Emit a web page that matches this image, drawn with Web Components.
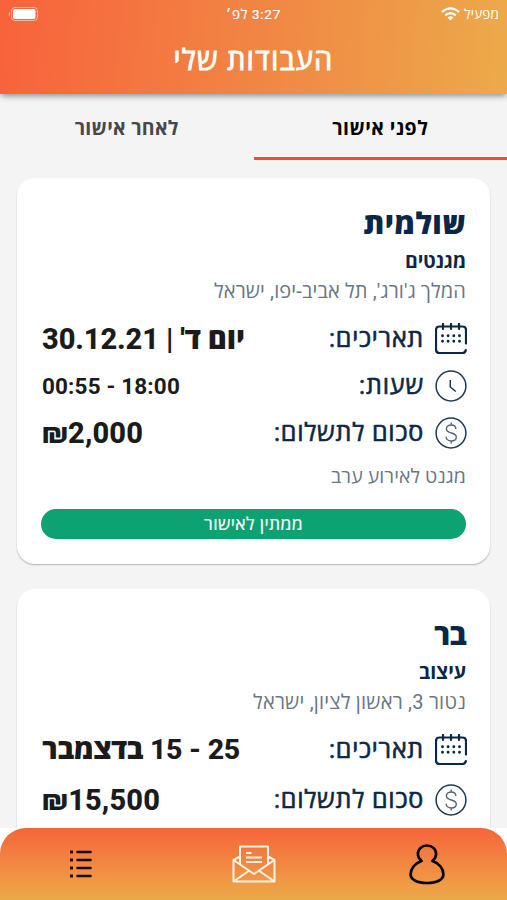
<!DOCTYPE html>
<html lang="he" dir="rtl">
<head>
<meta charset="utf-8">
<title>העבודות שלי</title>
<style>
html,body{margin:0;height:100%}
body{background:#f4f4f4;font-family:Roboto,"Open Sans","Liberation Sans",sans-serif;overflow:hidden}
</style>
</head>
<body>
<script>
const define=(name,html,setup)=>customElements.define(name,class extends HTMLElement{
  connectedCallback(){
    if(this.shadowRoot)return;
    this.attachShadow({mode:'open'}).innerHTML=html;
    if(setup)setup(this,this.shadowRoot);
  }
});

// One line of text, tracked so that its run is `w` pixels wide.
define('fit-text',`<style>:host{display:block;flex:none;white-space:nowrap}span{display:inline-block}</style><span><slot></slot></span>`,(el,root)=>{
  const s=root.querySelector('span'),w=+el.getAttribute('w');
  const n=el.textContent.length;
  if(w)s.style.letterSpacing=((w-s.getBoundingClientRect().width)/n).toFixed(3)+'px';
});

const ICONS={
  calendar:`<svg width="32" height="32" viewBox="0 0 32 32" fill="none" stroke="#0b2747" stroke-width="2.200" stroke-linecap="round"><path d="M31 20.500V7q0-3.500-3.500-3.500H4.500Q1 3.500 1 7v19.500Q1 30 4.500 30h23q2.800 0 3.300-3"/><path d="M8 1v5M16 1v5M24 1v5"/><path d="M7.500 12.800h.01M13.100 12.800h.01M18.800 12.800h.01M24.500 12.800h.01M7.500 18.300h.01M13.100 18.300h.01M18.800 18.300h.01M24.500 18.300h.01" stroke-width="2.900"/></svg>`,
  clock:`<svg width="32" height="32" viewBox="0 0 32 32" fill="none" stroke="#1d3854" stroke-width="1.500"><circle cx="16" cy="16" r="14.900"/><path d="M15.300 10v7l5.500 4.500"/></svg>`,
  dollar:`<svg width="32" height="32" viewBox="0 0 32 32" fill="none" stroke="#1d3854" stroke-width="1.500"><circle cx="16" cy="16" r="14.900"/><path d="M20.800 12c0-2.400-2-4-4.600-4-2.700 0-4.800 1.500-4.800 4 0 5.300 9.900 2.600 9.900 8 0 2.500-2.200 4-5 4-2.900 0-5.200-1.700-5.200-4.300M16.200 5.500V8M16.200 24v2.500" stroke="#51657a" stroke-width="1.400"/></svg>`,
  person:`<svg width="36" height="42" viewBox="0 0 36 42" fill="none" stroke="#000" stroke-width="2.700" stroke-linejoin="round"><path d="M12.600 18C10 16 8.900 13.700 8.900 11 8.900 6 12.900 2.500 18 2.500s9.100 3.500 9.100 8.500c0 2.700-1.100 5-3.700 7 6.500 2 11 7.600 11 13.300C34.400 36.800 27.500 40 18 40S1.600 36.800 1.600 31.300c0-5.700 4.500-11.300 11-13.300Z"/></svg>`,
  mail:`<svg width="44" height="38" viewBox="0 0 44 38" fill="none" stroke="#fff3e4" stroke-width="2" stroke-linejoin="round"><path d="M8 11.500 1.500 15v21.500h41V15L36 11.500M8 20V1.500h28V20M1.500 15 22 29 42.500 15M1.500 36.500 17 25.700M42.500 36.500 27 25.700"/><path d="M14 8h5.500M14 12.500h16M14 17h16"/></svg>`,
  list:`<svg width="24" height="30" viewBox="0 0 24 30" fill="#1c0b05"><path d="M1 1.500h3v3H1zM1 9.500h3v3H1zM1 17.500h3v3H1zM1 25.500h3v3H1z"/><path d="M8.500 3h13M8.500 11h13M8.500 19h13M8.500 27h13" stroke="#1c0b05" stroke-width="2.600" stroke-linecap="round"/></svg>`,
  wifi:`<svg width="19" height="14" viewBox="0 0 19 14" fill="none" stroke="#fff" stroke-width="2.300"><path d="M1 5Q9.500-2.300 18 5M4.200 8.300Q9.500 3.900 14.800 8.300"/><path d="M9.500 13.500 6.500 10.400Q9.500 8.100 12.500 10.400Z" fill="#fff" stroke="none"/></svg>`,
  battery:`<svg width="30" height="14" viewBox="0 0 30 14"><rect x="3.500" y=".5" width="26" height="13" rx="3.500" fill="none" stroke="#fff" stroke-opacity=".5"/><rect x="5" y="2" width="22.500" height="10" rx="2" fill="#fff"/><path d="M2 5v4Q.5 8.500.5 7T2 5Z" fill="#fff" fill-opacity=".5"/></svg>`
};
define('line-icon',`<style>:host{display:block;flex:none}svg{display:block}</style>`,(el,root)=>{
  root.innerHTML+=ICONS[el.getAttribute('name')];
});

define('status-bar',`<style>
:host{display:grid;grid-template-columns:1fr auto 1fr;align-items:center;height:27px;padding:0 8px;color:#fff;font-size:13.500px;line-height:20px}
.net{display:flex;align-items:center;gap:4px}
.bat{justify-self:end}
.time{-webkit-text-stroke:.2px}
</style><div class="net"><fit-text w="35">מפעיל</fit-text><line-icon name="wifi"></line-icon></div>
<fit-text class="time" w="55">3:27 לפ׳</fit-text><line-icon class="bat" name="battery"></line-icon>`);

define('app-header',`<style>
:host{display:block;flex:none;height:94px;position:relative;z-index:1;background:linear-gradient(95deg,#f8623c 0%,#f18544 50%,#ecaa4a 100%);box-shadow:0 3px 6px -1px rgba(0,0,0,.42)}
.title{display:flex;justify-content:center;align-items:center;height:66px;color:#fff;font-size:29px;-webkit-text-stroke:.9px;line-height:36px}
</style><status-bar></status-bar><div class="title"><slot></slot></div>`);

define('tab-item',`<style>
:host{flex:1;display:flex;justify-content:center;align-items:center;box-sizing:border-box;height:66px;padding-top:6px;border-bottom:3px solid transparent;font-size:19.500px;font-weight:700;line-height:24px;color:#484848}
:host([selected]){color:#000;border-color:#ec4a42}
</style><slot></slot>`);
define('tab-bar',`<style>:host{display:flex;flex:none}</style><slot></slot>`);

define('detail-row',`<style>
:host{display:flex;align-items:center;height:47px;margin-inline-end:1px;color:#0b2747;font-size:25px;line-height:36px}
line-icon{margin-inline-start:-1px}
.label{margin-inline-start:11px;-webkit-text-stroke:.6px}
.value{margin-inline-start:auto;color:#1b1b1b;font-weight:800;font-size:29px}
</style><line-icon></line-icon><div class="label"><slot name="label"></slot></div><div class="value"><slot></slot></div>`,(el,root)=>{
  const i=document.createElement('line-icon');
  i.setAttribute('name',el.getAttribute('icon'));
  root.querySelector('line-icon').replaceWith(i);
});

define('job-card',`<style>
:host{display:block;flex:none;box-sizing:border-box;height:386px;margin:0 17px 25px;padding:27px 24px 0;border-radius:18px;background:#fff;box-shadow:0 1.500px 1.500px -.5px rgba(0,0,0,.26)}
.name{height:36px;line-height:38px;font-size:29.500px;font-weight:800;color:#0b2747}
.kind{height:42px;line-height:42px;font-size:19.500px;font-weight:700;color:#0b2747}
.place{height:18px;line-height:17px;font-size:20px;color:#6a7686}
.rows{display:flex;flex-direction:column;gap:var(--row-gap,0);margin-top:14px}
.note{height:42px;line-height:42px;font-size:19.500px;color:#6a7686}
</style><div class="name"><slot name="name"></slot></div><div class="kind"><slot name="kind"></slot></div><div class="place"><slot name="place"></slot></div>
<div class="rows"><slot></slot></div><div class="note"><slot name="note"></slot></div><slot name="action"></slot>`);

define('status-pill',`<style>
:host{display:flex;justify-content:center;align-items:center;height:30px;margin-top:11px;border-radius:15px;background:#0da271;color:#fff;font-size:17.500px;line-height:24px;-webkit-text-stroke:.2px}
</style><slot></slot>`);

define('bottom-nav',`<style>
:host{display:block;flex:none;height:72px;background:#fff}
nav{display:flex;align-items:center;height:72px;border-radius:26px 26px 0 0;background:linear-gradient(#f6653b,#ecaa49)}
nav>*{flex:1;display:flex;justify-content:center}
.a{padding-left:12px}.c{padding-right:12px}
.a,.c{box-sizing:border-box}
</style><nav><div class="a"><line-icon name="person"></line-icon></div><div><line-icon name="mail"></line-icon></div><div class="c"><line-icon name="list"></line-icon></div></nav>`);

define('jobs-app',`<style>
:host{display:flex;flex-direction:column;width:507px;height:900px;overflow:hidden;background:#f4f4f4}
main{flex:1;min-height:0;overflow:hidden;display:flex;flex-direction:column;padding-top:18px}
</style>
<app-header><fit-text w="160">העבודות שלי</fit-text></app-header>
<tab-bar><tab-item selected><fit-text w="96">לפני אישור</fit-text></tab-item><tab-item><fit-text w="104">לאחר אישור</fit-text></tab-item></tab-bar>
<main>
<job-card>
<fit-text slot="name" w="102.500">שולמית</fit-text><fit-text slot="kind" w="61">מגנטים</fit-text><fit-text slot="place" w="252">המלך ג'ורג', תל אביב-יפו, ישראל</fit-text>
<detail-row icon="calendar"><fit-text slot="label" w="95">תאריכים:</fit-text><fit-text w="203">יום ד' | 30.12.21</fit-text></detail-row>
<detail-row icon="clock"><fit-text slot="label" w="65">שעות:</fit-text><fit-text w="138" style="font-size:22.500px;font-weight:700">18:00 - 00:55</fit-text></detail-row>
<detail-row icon="dollar"><fit-text slot="label" w="150">סכום לתשלום:</fit-text><fit-text w="101">₪2,000</fit-text></detail-row>
<fit-text slot="note" w="135">מגנט לאירוע ערב</fit-text>
<status-pill slot="action"><fit-text w="99">ממתין לאישור</fit-text></status-pill>
</job-card>
<job-card style="--row-gap:3px">
<fit-text slot="name" w="32">בר</fit-text><fit-text slot="kind" w="47">עיצוב</fit-text><fit-text slot="place" w="213">נטור 3, ראשון לציון, ישראל</fit-text>
<detail-row icon="calendar"><fit-text slot="label" w="95">תאריכים:</fit-text><fit-text w="198" style="font-size:28.500px">25 - 15 בדצמבר</fit-text></detail-row>
<detail-row icon="dollar"><fit-text slot="label" w="150">סכום לתשלום:</fit-text><fit-text w="118">₪15,500</fit-text></detail-row>
</job-card>
</main>
<bottom-nav></bottom-nav>`);
</script>
<jobs-app></jobs-app>
</body>
</html>
